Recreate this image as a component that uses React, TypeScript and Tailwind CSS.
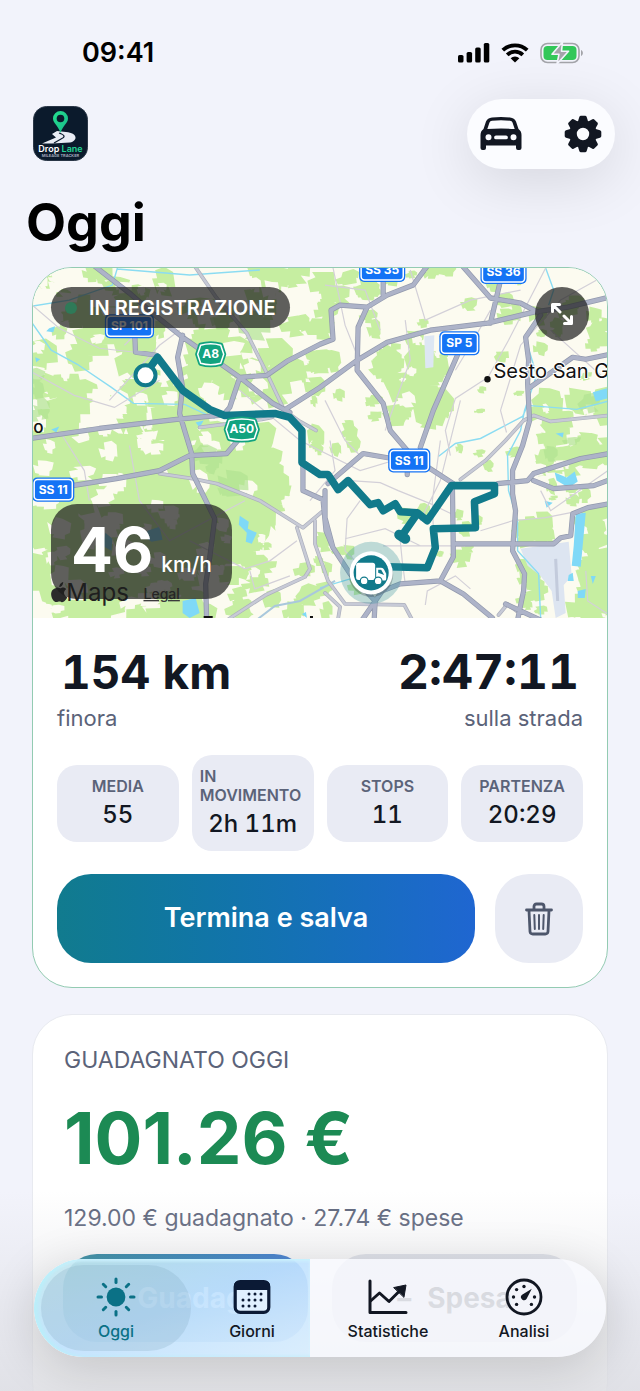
import React, { useState } from 'react';

type Point = [number, number];

interface Zone {
  x: number;
  y: number;
  w: number;
  h: number;
  count: number;
  size: number;
}

// Small seeded generator so that the fields look the same on every render
const createRandom = (seed: number) => {
  let s = seed;
  return () => {
    s = (s * 16807) % 2147483647;
    return s / 2147483647;
  };
};

const buildPatches = (zones: Zone[], seed: number): string => {
  const rand = createRandom(seed);
  const parts: string[] = [];
  zones.forEach((z) => {
    for (let i = 0; i < z.count; i++) {
      const cx = z.x + rand() * z.w;
      const cy = z.y + rand() * z.h;
      const r = z.size * (0.5 + rand() * 0.7);
      const tilt = -0.3 + rand() * 0.25;
      const cos = Math.cos(tilt);
      const sin = Math.sin(tilt);
      const w = r * (0.6 + rand() * 0.6);
      const h = r * (0.5 + rand() * 0.6);
      const n = () => 0.25 + rand() * 0.4;
      // a field: rough rectangle with notched corners
      const shape: Point[] = [
        [-w, -h * n()],
        [-w * n(), -h * n()],
        [-w * n(), -h],
        [w * n(), -h * (0.7 + rand() * 0.4)],
        [w, -h * n()],
        [w * (0.7 + rand() * 0.3), h * n()],
        [w * n(), h * n()],
        [w * n(), h],
        [-w * n(), h * (0.7 + rand() * 0.3)],
        [-w * n(), h * n()],
        [-w * (0.8 + rand() * 0.2), h * n()],
      ];
      const pts = shape.map(([px, py]) => `${(cx + px * cos - py * sin).toFixed(1)} ${(cy + px * sin + py * cos).toFixed(1)}`);
      parts.push(`M${pts.join('L')}Z`);
    }
  });
  return parts.join('');
};

const greenZones: Zone[] = [
  { x: 33, y: 268, w: 140, h: 130, count: 30, size: 19 },
  { x: 160, y: 268, w: 140, h: 130, count: 32, size: 18 },
  { x: 33, y: 400, w: 165, h: 215, count: 84, size: 28 },
  { x: 200, y: 435, w: 75, h: 110, count: 46, size: 24 },
  { x: 200, y: 540, w: 130, h: 75, count: 26, size: 13 },
  { x: 300, y: 268, w: 100, h: 120, count: 22, size: 13 },
  { x: 385, y: 345, w: 50, h: 75, count: 22, size: 18 },
  { x: 310, y: 390, w: 80, h: 60, count: 12, size: 11 },
  { x: 400, y: 268, w: 120, h: 90, count: 16, size: 9 },
  { x: 440, y: 380, w: 80, h: 90, count: 8, size: 7 },
  { x: 540, y: 400, w: 67, h: 65, count: 24, size: 15 },
  { x: 535, y: 465, w: 67, h: 40, count: 8, size: 9 },
  { x: 522, y: 520, w: 28, h: 24, count: 12, size: 12 },
  { x: 588, y: 515, w: 20, h: 95, count: 30, size: 16 },
  { x: 520, y: 560, w: 25, h: 55, count: 9, size: 12 },
  { x: 335, y: 500, w: 150, h: 110, count: 13, size: 8 },
  { x: 530, y: 290, w: 75, h: 90, count: 13, size: 10 },
];

const creamZones: Zone[] = [
  { x: 33, y: 270, w: 240, h: 130, count: 30, size: 12 },
  { x: 33, y: 400, w: 180, h: 210, count: 48, size: 12 },
  { x: 200, y: 430, w: 90, h: 180, count: 15, size: 9 },
  { x: 380, y: 340, w: 60, h: 80, count: 6, size: 7 },
  { x: 535, y: 400, w: 70, h: 200, count: 10, size: 8 },
];

const greenFields = buildPatches(greenZones, 4711);
const darkFields = buildPatches(
  [
    { x: 33, y: 370, w: 12, h: 60, count: 4, size: 14 },
    { x: 200, y: 280, w: 60, h: 60, count: 4, size: 14 },
    { x: 200, y: 450, w: 50, h: 60, count: 5, size: 11 },
    { x: 545, y: 400, w: 60, h: 90, count: 3, size: 9 },
  ],
  97,
);
const creamFields = buildPatches(creamZones, 1203);

const highways: Point[][] = [
  [[95, 266], [130, 293], [153, 313], [183, 337], [240, 377], [273, 403], [290, 412]],
  [[183, 335], [178, 357], [183, 387], [180, 413], [185, 430], [192, 453], [193, 473], [215, 518], [210, 557], [206, 583], [207, 620]],
  [[31, 438], [100, 428], [177, 419], [230, 414]],
  [[135, 327], [136, 352], [157, 355]],
  [[223, 415], [230, 407], [240, 377], [267, 375], [287, 361], [320, 344], [333, 339], [331, 310], [340, 305], [367, 307], [387, 295], [413, 285], [427, 266]],
  [[287, 408], [320, 387], [357, 360], [387, 342], [430, 330], [487, 323], [533, 312], [567, 307], [609, 297]],
  [[367, 307], [358, 327], [357, 370], [383, 403], [390, 430], [407, 450], [407, 474]],
  [[383, 278], [383, 295]],
  [[462, 266], [490, 298], [520, 303], [537, 312]],
  [[500, 280], [490, 323]],
  [[457, 355], [433, 410], [420, 447]],
  [[540, 315], [525, 337], [528, 360], [527, 383], [529, 420], [522, 445], [512, 470], [512, 493], [515, 510], [512, 550], [524, 573], [523, 590], [517, 619]],
  [[528, 388], [572, 357], [585, 359], [609, 354]],
  [[609, 453], [580, 458], [533, 473], [527, 480], [497, 483]],
  [[533, 480], [553, 488], [593, 485], [609, 479]],
  [[453, 543], [553, 543], [560, 537], [570, 535], [572, 513], [587, 507], [609, 503]],
  [[452, 483], [453, 556], [440, 580], [400, 583], [382, 590], [362, 619]],
  [[440, 580], [463, 593], [492, 617]],
  [[505, 603], [540, 619]],
  [[425, 465], [453, 483]],
  [[328, 483], [363, 453], [392, 458]],
  [[325, 490], [325, 517], [333, 547], [350, 573], [375, 600], [374, 619]],
  [[73, 485], [117, 478], [160, 470], [190, 455], [227, 453], [238, 440]],
  [[303, 463], [303, 490], [323, 499], [326, 530], [333, 547]],
];

const roads: Point[][] = [
  [[195, 266], [217, 298], [247, 333], [267, 373], [283, 407]],
  [[283, 409], [300, 421], [316, 430]],
  [[160, 473], [193, 478], [217, 483], [260, 500], [303, 527], [322, 511]],
  [[297, 527], [310, 568], [305, 576], [266, 594], [229, 618]],
  [[315, 520], [315, 543], [328, 580], [345, 603], [404, 604], [412, 619]],
  [[460, 479], [485, 460], [505, 440], [523, 420], [533, 415], [550, 421], [609, 415]],
  [[498, 614], [507, 603], [516, 610]],
  [[325, 592], [340, 606], [338, 618]],
  [[200, 427], [262, 419], [272, 417]],
];

const lanes: Point[][] = [
  [[33, 305], [60, 328], [100, 348], [136, 352]],
  [[333, 268], [345, 325], [357, 355]],
  [[545, 268], [508, 340], [487, 378]],
  [[486, 378], [455, 398], [445, 430], [450, 455]],
  [[405, 320], [410, 360], [385, 430]],
  [[455, 370], [470, 345], [490, 310]],
  [[605, 275], [560, 300], [520, 345], [500, 410], [506, 432]],
  [[460, 400], [440, 480], [420, 520]],
  [[383, 545], [415, 545], [470, 545]],
  [[480, 530], [512, 520], [545, 517], [570, 512]],
  [[350, 480], [380, 482], [398, 490], [430, 503], [455, 515]],
  [[360, 500], [347, 518], [345, 550], [360, 565]],
  [[345, 538], [385, 528], [420, 545]],
  [[405, 583], [402, 560], [400, 540]],
  [[425, 604], [427, 590], [455, 575], [470, 588]],
  [[585, 570], [587, 600], [607, 613]],
  [[60, 430], [85, 470], [90, 500]],
  [[33, 372], [75, 395], [115, 407], [160, 380]],
  [[110, 400], [160, 345], [180, 330]],
  [[190, 540], [245, 568], [270, 560], [297, 540]],
  [[130, 445], [140, 500], [170, 540], [245, 500]],
  [[240, 390], [300, 440], [360, 470], [410, 455]],
  [[325, 400], [345, 440], [360, 455]],
  [[160, 300], [140, 330], [125, 345]],
  [[325, 285], [365, 290], [380, 330]],
  [[550, 330], [600, 375]],
  [[410, 270], [425, 320], [470, 300], [520, 290]],
  [[330, 440], [335, 470], [310, 500]],
  [[440, 440], [432, 500], [433, 528]],
  [[250, 570], [255, 588], [290, 575]],
  [[540, 490], [550, 510], [607, 470]],
];

const streams: Point[][] = [
  [[118, 268], [113, 285], [70, 300], [33, 306]],
  [[118, 269], [190, 275], [260, 270]],
  [[33, 323], [52, 350], [78, 364], [112, 387], [134, 403], [185, 404], [215, 418]],
  [[545, 268], [553, 290], [548, 305]],
  [[438, 456], [455, 443], [480, 438], [522, 416], [527, 405], [576, 409], [607, 401]],
  [[527, 345], [536, 375], [524, 410], [520, 430], [507, 455], [508, 490], [517, 520], [517, 550], [538, 573], [540, 617]],
  [[320, 587], [350, 578], [372, 590]],
];

const route =
  'M150 368L158 357L183 390L210 409L225 415L275 413L290 417L302 430L302 462L320 474L328 474L338 489L348 480L370 504L378 502L383 510L395 503L400 511L417 512L427 520L451 485L494 485L494 493L474 501L475 527L433 528L435 547L427 567L388 566';

const toPath = (lines: Point[][]) => lines.map((l) => `M${l.map((p) => p.join(' ')).join('L')}`).join('');

const BlueShield: React.FC<{ x: number; y: number; w: number; label: string }> = ({ x, y, w, label }) => (
  <g>
    <rect x={x - w / 2 - 1} y={y - 12} width={w + 2} height={24} rx={5} fill="#1473f5" />
    <rect x={x - w / 2 + 1} y={y - 10} width={w - 2} height={20} rx={3.5} fill="#1473f5" stroke="#fff" strokeWidth={1.5} />
    <text x={x} y={y + 4} textAnchor="middle" fontSize={12} fontWeight={700} fill="#fff">
      {label}
    </text>
  </g>
);

const GreenShield: React.FC<{ x: number; y: number; w: number; label: string }> = ({ x, y, w, label }) => (
  <g transform={`translate(${x} ${y})`} strokeLinejoin="round">
    <path
      d={`M${-w / 2 + 3} -9Q0 -12 ${w / 2 - 3} -9L${w / 2} 0L${w / 2 - 3} 9Q0 12 ${-w / 2 + 3} 9L${-w / 2} 0Z`}
      fill="#12a37f"
      stroke="#12a37f"
      strokeWidth={5}
    />
    <path
      d={`M${-w / 2 + 3} -9Q0 -12 ${w / 2 - 3} -9L${w / 2} 0L${w / 2 - 3} 9Q0 12 ${-w / 2 + 3} 9L${-w / 2} 0Z`}
      fill="#12a37f"
      stroke="#fff"
      strokeWidth={1.5}
    />
    <text y={4} textAnchor="middle" fontSize={12} fontWeight={700} fill="#fff">
      {label}
    </text>
  </g>
);

const RouteMap: React.FC = () => (
  <svg
    viewBox="33 268 574 349"
    preserveAspectRatio="xMidYMid slice"
    className="block w-full h-full"
    role="img"
    aria-label="Mappa del percorso"
  >
    <rect x={20} y={250} width={600} height={400} fill="#fcfbf0" />
    <path d={greenFields} fill="#c6eea1" />
    <path d={creamFields} fill="#fcfbf0" />
    <path d={darkFields} fill="#b0e291" opacity={0.7} />

    {/* Aeroporti */}
    <path d="M520 548L568 541L571 575L563 584L565 612L555 617L551 590L540 575L527 565Z" fill="#dde5f1" />
    <path d="M555 558L557 600" stroke="#c3cbdc" strokeWidth={3} fill="none" />
    <path d="M424 336L434 335L433 367L425 368Z" fill="#dde7f3" />

    {/* Acqua */}
    <g fill="#7fd9f7">
      <path d="M575 513L585 512L580 566L571 565L573 545Z" />
      <path d="M554 472L566 477L574 471L577 481L568 487L556 480Z" />
      <path d="M592 392L606 388L607 398L595 401Z" />
      <path d="M240 515L249 521L248 528L257 532L252 543L246 541L247 532L239 524Z" />
      <path d="M183 600L196 597L200 612L190 617L183 612Z" />
      <path d="M148 530L160 526L163 539L152 541L146 537Z" />
      <path d="M106 532L113 538L112 550L103 545Z" />
      <path d="M577 590L585 588L584 597L577 597ZM568 574L572 572L573 580L567 580ZM590 575L595 575L592 583Z" />
      <path d="M50 328L56 326L54 332L47 331ZM36 357L41 359L37 362ZM52 429L60 426L57 432ZM196 422L204 420L200 427Z" />
      <path d="M544 500L552 502L546 507ZM555 433L563 432L562 437ZM302 613L306 611L307 617Z" />
    </g>
    <path d={toPath(streams)} fill="none" stroke="#8bdcf2" strokeWidth={1.4} />
    <path d="M258 618L275 605L300 600L335 580" fill="none" stroke="#a9c8dc" strokeWidth={2} />

    {/* Strade */}
    <path d={toPath(lanes)} fill="none" stroke="#d3d0d8" strokeWidth={1.2} />
    <g fill="none" strokeLinejoin="round" strokeLinecap="round">
      <path d={toPath(roads)} stroke="#adb0bd" strokeWidth={3.8} />
      <path d={toPath(roads)} stroke="#c7cad6" strokeWidth={2.4} />
      <path d={toPath(highways)} stroke="#9299ad" strokeWidth={5.2} />
      <path d={toPath(highways)} stroke="#adb3c8" strokeWidth={3.8} />
    </g>

    {/* Percorso */}
    <g fill="none" stroke="#117a8b" strokeWidth={7.5} strokeLinejoin="round" strokeLinecap="round">
      <path d={route} />
      <path d="M417 513L403 533" />
      <path d="M399 534L405 538" strokeWidth={10} />
      <circle cx={146} cy={375} r={10} fill="#fff" strokeWidth={4} />
    </g>

    <g fontFamily="Inter, sans-serif">
      <BlueShield x={382} y={270} w={44} label="SS 35" />
      <BlueShield x={503} y={272} w={44} label="SS 36" />
      <BlueShield x={130} y={326} w={47} label="SP 101" />
      <BlueShield x={459} y={343} w={38} label="SP 5" />
      <BlueShield x={409} y={460} w={40} label="SS 11" />
      <BlueShield x={54} y={489} w={40} label="SS 11" />
      <GreenShield x={211} y={354} w={26} label="A8" />
      <GreenShield x={242} y={429} w={31} label="A50" />
      <circle cx={487} cy={379} r={3.2} fill="#111" />
      <text x={493} y={378} fontSize={20} fontWeight={400} fill="#111" stroke="#fff" strokeWidth={2} paintOrder="stroke">
        Sesto San G
      </text>
      <text x={34} y={433} fontSize={17} fontWeight={500} fill="#111">
        o
      </text>
      <path d="M204 616H213M310 616H313" stroke="#111" strokeWidth={2} />
      <path
        d="M60 585C61 582 63 581 64 581C64 584 62 586 60 586ZM57 587C59 586 60 588 62 587C64 586 66 587 67 588C63 591 65 595 68 596C67 599 64 602 62 601C60 600 59 601 57 601C53 601 48 589 57 587Z"
        fill="#2b2b2b"
      />
      <text x={67} y={600} fontSize={24} fontWeight={400} fill="#222">
        Maps
      </text>
      <text x={144} y={598} fontSize={14} fontWeight={500} fill="#3c3c3c" textDecoration="underline">
        Legal
      </text>
    </g>

    {/* Posizione attuale */}
    <circle cx={371} cy={572} r={31} fill="#2f8f9a" opacity={0.3} />
    <circle cx={371} cy={574} r={22} fill="#000" opacity={0.2} />
    <circle cx={371} cy={572} r={21.5} fill="#fff" />
    <circle cx={371} cy={572} r={17.5} fill="#117a8b" />
    <g fill="#fff">
      <rect x={356} y={562} width={19} height={17} rx={2.5} />
      <path d="M376 567H381Q383 567 384 569L386 573V578Q386 579.500 384.500 579.500H376Z" />
      <circle cx={364} cy={580} r={3.8} stroke="#117a8b" strokeWidth={1.2} />
      <circle cx={378} cy={580} r={3.8} stroke="#117a8b" strokeWidth={1.2} />
    </g>
    <path d="M378 569H381L384 574L378 572Z" fill="#117a8b" />
  </svg>
);

const SignalIcon: React.FC = () => (
  <svg width="32" height="20" viewBox="0 0 32 20" aria-hidden="true">
    <rect x="0" y="12" width="5.500" height="7.500" rx="1.600" />
    <rect x="8.600" y="9" width="5.500" height="10.500" rx="1.600" />
    <rect x="17.200" y="4.500" width="5.500" height="15" rx="1.600" />
    <rect x="25.800" y="0" width="5.500" height="19.500" rx="1.600" />
  </svg>
);

const WifiIcon: React.FC = () => (
  <svg width="28" height="20" viewBox="0 0 28 20" fill="none" stroke="#000" strokeWidth="3.800" aria-hidden="true">
    <path d="M1.800 7.200A17.600 17.600 0 0 1 26.200 7.200" />
    <path d="M6.200 11.800A11.200 11.200 0 0 1 21.800 11.800" />
    <path d="M9.600 15.200A6.300 6.300 0 0 1 18.400 15.200L14 19.600Z" fill="#000" stroke="none" />
  </svg>
);

const BatteryIcon: React.FC = () => (
  <svg width="44" height="22" viewBox="0 0 44 22" aria-hidden="true">
    <rect x="1" y="1.500" width="38" height="19" rx="6.500" fill="none" stroke="#a3a4a9" strokeWidth="1.600" />
    <rect x="3.500" y="4" width="33" height="14" rx="4" fill="#32c759" />
    <path d="M41 8C43.500 9 43.500 13 41 14Z" fill="#a3a4a9" />
    <path d="M22.500 0L12 12.200H19L17 22L28.500 9.200H21.500Z" fill="#a3a4a9" stroke="#f2f3fb" strokeWidth="1.600" strokeLinejoin="round" />
  </svg>
);

const LogoIcon: React.FC = () => (
  <svg width="56" height="56" viewBox="0 0 56 56" role="img" aria-label="Drop Lane">
    <defs>
      <linearGradient id="logoPin" x1="0" y1="0" x2="1" y2="1">
        <stop offset="0" stopColor="#25e08f" />
        <stop offset="1" stopColor="#17b88a" />
      </linearGradient>
    </defs>
    <rect x="1.500" y="0.500" width="54" height="54" rx="13" fill="#0b1a2c" stroke="#2a3646" strokeWidth="1" />
    <path d="M25 25L34 26C46 27 46 35 38 36.500L20 37.500H10L24 31.500L20 28Z" fill="#e9edf5" />
    <path d="M27 27Q36 30 29 33L22 37" fill="none" stroke="#0b1a2c" strokeWidth="1.200" />
    <path d="M28.500 27C26.500 20 21 17 21 12.500A7.500 7.500 0 0 1 36 12.500C36 17 30.500 20 28.500 27Z" fill="url(#logoPin)" />
    <circle cx="28.500" cy="12.500" r="3.800" fill="#0b1a2c" />
    <text x="28.500" y="46" textAnchor="middle" fontFamily="Inter, sans-serif" fontSize="9" fontWeight="600" fill="#fff">
      Drop <tspan fill="#22d394">Lane</tspan>
    </text>
    <text x="28.500" y="51" textAnchor="middle" fontFamily="Inter, sans-serif" fontSize="4" fontWeight="600" fill="#a9b2c0">
      MILEAGE TRACKER
    </text>
  </svg>
);

const CarIcon: React.FC = () => (
  <svg width="42" height="34" viewBox="0 0 42 34" aria-hidden="true">
    <path
      fillRule="evenodd"
      fill="#121722"
      d="M12 0.500Q21 -0.500 30 0.500Q34.500 1 36 4.500L38.500 12Q41.500 14 41.500 18V31Q41.500 33 39.500 33H38Q36 33 36 31V28.500H6V31Q6 33 4 33H2.500Q0.500 33 0.500 31V18Q0.500 14 3.500 12L6 4.500Q7.500 1 12 0.500ZM9.500 5.500L7.300 12Q21 11 34.700 12L32.500 5.500Q32 4 30 3.700Q21 2.800 12 3.700Q10 4 9.500 5.500ZM8.500 17.200A3 3 0 1 0 8.500 23.200A3 3 0 1 0 8.500 17.200ZM33.500 17.200A3 3 0 1 0 33.500 23.200A3 3 0 1 0 33.500 17.200ZM16 18.500A1.900 1.900 0 0 0 16 22.300H26A1.900 1.900 0 0 0 26 18.500Z"
    />
  </svg>
);

const GearIcon: React.FC = () => (
  <svg width="38" height="38" viewBox="-19 -19 38 38" fill="#121722" aria-hidden="true">
    {[0, 45, 90, 135, 180, 225, 270, 315].map((angle) => (
      <path key={angle} transform={`rotate(${angle})`} d="M-5.500 -11L-3.700 -17Q-3.300 -18.300 -2 -18.300H2Q3.300 -18.300 3.700 -17L5.500 -11Z" />
    ))}
    <circle r="10" fill="none" stroke="#121722" strokeWidth="7.600" />
  </svg>
);

const TrashIcon: React.FC = () => (
  <svg width="28" height="34" viewBox="0 0 28 34" fill="none" stroke="#4d566b" strokeLinecap="round" strokeLinejoin="round" aria-hidden="true">
    <path strokeWidth="2.800" d="M1.500 8H26.500M9 7.500V4.500Q9 2 11.500 2H16.500Q19 2 19 4.500V7.500M4 8.500L5 29.500Q5.200 32 7.800 32H20.200Q22.800 32 23 29.500L24 8.500" />
    <path strokeWidth="2" d="M9.300 13L9.800 27M14 13V27M18.700 13L18.200 27" />
  </svg>
);

const ExpandIcon: React.FC = () => (
  <svg width="22" height="22" viewBox="0 0 22 22" fill="none" stroke="#fff" strokeWidth="3" strokeLinecap="round" strokeLinejoin="round" aria-hidden="true">
    <path d="M1.500 8.500V1.500H8.500M2 2L9 9M20.500 13.500V20.500H13.500M20 20L13 13" />
  </svg>
);

const SunIcon: React.FC = () => (
  <svg width="40" height="40" viewBox="-20 -20 40 40" aria-hidden="true">
    <circle r="9.400" fill="#0b7186" />
    {[0, 45, 90, 135, 180, 225, 270, 315].map((angle) => (
      <path key={angle} transform={`rotate(${angle})`} d="M0 -14.500V-18" stroke="#0b7186" strokeWidth="3" strokeLinecap="round" />
    ))}
  </svg>
);

const CalendarIcon: React.FC = () => (
  <svg width="38" height="34" viewBox="0 0 38 34" aria-hidden="true">
    <rect x="2.200" y="1.700" width="33.600" height="30.600" rx="5" fill="#e0f0ff" stroke="#0b1a35" strokeWidth="3.200" />
    <path d="M1 10V6Q1 1 6 1H32Q37 1 37 6V10Z" fill="#0b1a35" />
    <g fill="#0b1a35">
      {[16, 22, 28].map((x) => (
        <circle key={x} cx={x} cy="14" r="1.500" />
      ))}
      {[10, 16, 22, 28].map((x) => (
        <circle key={x} cx={x} cy="20" r="1.500" />
      ))}
      {[10, 16, 22].map((x) => (
        <circle key={x} cx={x} cy="26" r="1.500" />
      ))}
    </g>
  </svg>
);

const ChartIcon: React.FC = () => (
  <svg width="40" height="36" viewBox="0 0 40 36" fill="none" stroke="#121722" strokeWidth="3" strokeLinecap="round" strokeLinejoin="round" aria-hidden="true">
    <path d="M2 2V33.500H38" />
    <path d="M2.500 22L11.500 14L21 22.500L31 12.500" />
    <path d="M26 8.500L38 6L36 18Z" fill="#121722" strokeWidth="1" />
  </svg>
);

const GaugeIcon: React.FC = () => (
  <svg width="38" height="38" viewBox="-19 -19 38 38" aria-hidden="true">
    <circle r="17" fill="none" stroke="#121722" strokeWidth="2.800" />
    <g fill="#121722">
      <circle cx="0" cy="-10.500" r="1.700" />
      <circle cx="-7.400" cy="-7.400" r="1.700" />
      <circle cx="-10.500" cy="0" r="1.700" />
      <circle cx="-7.400" cy="7.400" r="1.700" />
      <circle cx="7.400" cy="7.400" r="1.700" />
      <circle cx="10.500" cy="0" r="1.700" />
      <path d="M7.800 -8.200L2.500 2A3 3 0 1 1 -2.300 -2Z" />
    </g>
  </svg>
);

const stats = [
  { label: 'MEDIA', value: '55' },
  { label: 'IN MOVIMENTO', value: '2h 11m' },
  { label: 'STOPS', value: '11' },
  { label: 'PARTENZA', value: '20:29' },
];

const tabs = [
  { id: 'oggi', label: 'Oggi', icon: SunIcon },
  { id: 'giorni', label: 'Giorni', icon: CalendarIcon },
  { id: 'statistiche', label: 'Statistiche', icon: ChartIcon },
  { id: 'analisi', label: 'Analisi', icon: GaugeIcon },
];

const App: React.FC = () => {
  const [activeTab, setActiveTab] = useState('oggi');

  return (
    <div className="relative h-screen overflow-hidden bg-[#f2f3fb] text-[#121722] font-['Inter',sans-serif]">
      {/* Barra di stato */}
      <div className="flex items-center justify-between h-[99px] pt-1.5 pl-[82px] pr-14">
        <span className="text-[27px] leading-8 font-semibold text-black">09:41</span>
        <div className="flex items-center gap-[11px]">
          <SignalIcon />
          <WifiIcon />
          <BatteryIcon />
        </div>
      </div>

      {/* Header */}
      <header className="flex items-center justify-between pl-8 pr-[25px]">
        <LogoIcon />
        <div className="flex items-center justify-between w-[148px] h-[70px] px-3 rounded-full bg-[#fbfcff] shadow-[0_12px_60px_rgba(0,0,0,0.12)]">
          <button type="button" title="Veicolo" className="flex items-center justify-center w-11 h-11">
            <CarIcon />
          </button>
          <button type="button" title="Impostazioni" className="flex items-center justify-center w-10 h-11">
            <GearIcon />
          </button>
        </div>
      </header>

      <h1 className="mt-[22px] mb-3 pl-[26px] text-[52px] leading-[64px] font-bold text-black">Oggi</h1>

      <main className="px-8 space-y-[26px]">
        {/* Viaggio in corso */}
        <section className="overflow-hidden rounded-[40px] border border-[#93cbb2] bg-white">
          <div className="relative h-[350px]">
            <RouteMap />
            <div className="absolute left-[18px] top-[19px] flex items-center h-[41px] px-3.5 gap-3 rounded-full bg-[#1c1c1c]/70">
              <span className="w-3 h-3 rounded-full bg-[#2f7a58]" />
              <span className="text-[20px] font-semibold text-white">IN REGISTRAZIONE</span>
            </div>
            <button
              type="button"
              title="Espandi mappa"
              className="absolute right-[18px] top-[19px] flex items-center justify-center w-[54px] h-[54px] rounded-full bg-[#1c1c1c]/70"
            >
              <ExpandIcon />
            </button>
            <div className="absolute left-[18px] bottom-[19px] flex items-baseline gap-2 h-[95px] pt-4 px-5 rounded-[26px] bg-[#1c1c1c]/70 text-white">
              <span className="text-[62px] leading-[60px] font-bold">46</span>
              <span className="text-[21px] leading-6 font-medium">km/h</span>
            </div>
          </div>

          <div className="px-6 pt-[26px] pb-6">
            <div className="flex justify-between">
              <div>
                <p className="pl-1 text-[46px] leading-[56px] font-bold tabular-nums">154 km</p>
                <p className="mt-0.5 text-[22px] leading-8 text-[#5b6379]">finora</p>
              </div>
              <div className="text-right">
                <p className="pr-1 text-[48px] leading-[56px] font-bold tabular-nums">2:47:11</p>
                <p className="mt-0.5 text-[22px] leading-8 text-[#5b6379]">sulla strada</p>
              </div>
            </div>

            <div className="grid grid-cols-4 items-center gap-[13px] mt-[21px]">
              {stats.map((stat) => (
                <div key={stat.label} className="flex flex-col items-center gap-1 px-2 pt-3 pb-3 rounded-[20px] bg-[#e9ebf4]">
                  <p className="text-base leading-[19px] font-semibold text-[#5b6379]">{stat.label}</p>
                  <p className="text-2xl leading-[30px] font-medium tabular-nums">{stat.value}</p>
                </div>
              ))}
            </div>

            <div className="flex gap-5 mt-[23px]">
              <button
                type="button"
                className="flex-1 h-[89px] rounded-[34px] bg-linear-to-r from-[#117b8e] to-[#1f66d1] text-[27px] font-semibold text-white"
              >
                Termina e salva
              </button>
              <button type="button" title="Elimina" className="flex items-center justify-center w-[88px] h-[89px] rounded-[34px] bg-[#e9ebf4]">
                <TrashIcon />
              </button>
            </div>
          </div>
        </section>

        {/* Guadagni */}
        <section className="px-[30px] pt-[29px] pb-20 rounded-[40px] border border-[#e8eaf0] bg-white">
          <div className="px-px">
            <h2 className="text-[23px] leading-8 text-[#5b6379]">GUADAGNATO OGGI</h2>
            <p className="mt-5 text-[71px] leading-[84px] font-bold text-[#1c8a54]">101.26 €</p>
            <p className="mt-[22px] text-[23px] leading-8 text-[#5b6379]">129.00 € guadagnato · 27.74 € spese</p>
          </div>
          <div className="grid grid-cols-2 gap-6 mt-5">
            <button
              type="button"
              className="flex items-center justify-center gap-4 h-[88px] rounded-[34px] bg-linear-to-r from-[#117b8e] to-[#1f66d1] text-[28px] font-bold text-white"
            >
              <span>+</span>
              <span>Guadagni</span>
            </button>
            <button type="button" className="flex items-center justify-center gap-4 h-[88px] rounded-[34px] bg-[#dfe2ea] text-[28px] font-bold text-[#121722]">
              <span>–</span>
              <span>Spesa</span>
            </button>
          </div>
        </section>
      </main>

      {/* Barra di navigazione */}
      <div className="absolute inset-x-0 bottom-0 h-[200px] bg-linear-to-b from-transparent to-[#dcdde2]/80" />
      <nav className="absolute inset-x-[34px] bottom-[34px] h-[98px] px-[14px] grid grid-cols-4 rounded-full overflow-hidden bg-[#f8faff]/78 shadow-[0_10px_50px_rgba(0,0,0,0.16)]">
        <div className="absolute inset-y-0 left-0 w-[276px] rounded-l-full bg-linear-to-br from-[#8fd3dc]/45 via-[#9dd3ff]/55 to-[#c9e8ff]/60 shadow-[inset_4px_0_4px_#b9effa,inset_0_2px_3px_#d6f2ff]" />
        {tabs.map((tab) => {
          const Icon = tab.icon;
          const active = activeTab === tab.id;
          return (
            <button
              key={tab.id}
              type="button"
              onClick={() => setActiveTab(tab.id)}
              className={`relative flex flex-col items-center pt-[18px] text-base font-medium ${active ? 'text-[#0b7186]' : 'text-[#121722]'}`}
            >
              {active && <span className="absolute -inset-x-[7px] top-1.5 bottom-1.5 rounded-full bg-[#7fa9bf]/25" />}
              <span className="relative flex items-center justify-center h-10">
                <Icon />
              </span>
              <span className="relative leading-6 mt-0.5">{tab.label}</span>
            </button>
          );
        })}
      </nav>
    </div>
  );
};

export default App;
